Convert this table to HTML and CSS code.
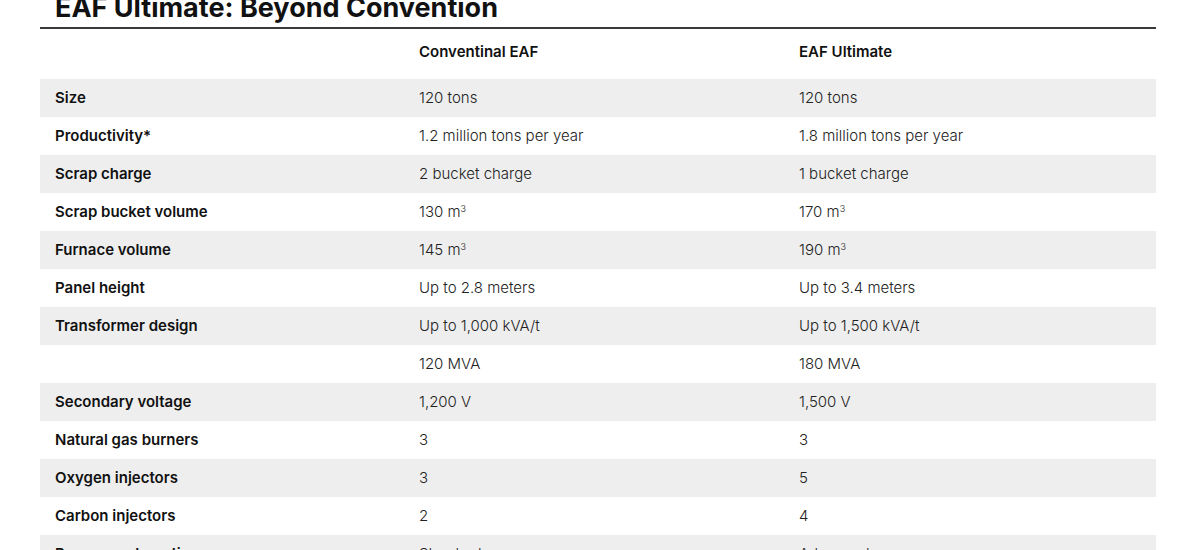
FILE: index.html
```html
<!DOCTYPE html>
<html lang="en">
<head>
<meta charset="utf-8">
<title>EAF Ultimate: Beyond Convention</title>
<link rel="stylesheet" href="styles.css">
</head>
<body>
<section class="compare">
  <h2 class="compare-title">EAF Ultimate: Beyond Convention</h2>
  <table class="compare-table">
    <colgroup>
      <col class="col-label">
      <col class="col-conv">
      <col class="col-ult">
    </colgroup>
    <thead>
      <tr>
        <th></th>
        <th>Conventinal EAF</th>
        <th>EAF Ultimate</th>
      </tr>
    </thead>
    <tbody>
      <tr><th>Size</th><td>120 tons</td><td>120 tons</td></tr>
      <tr><th>Productivity*</th><td>1.2 million tons per year</td><td>1.8 million tons per year</td></tr>
      <tr><th>Scrap charge</th><td>2 bucket charge</td><td>1 bucket charge</td></tr>
      <tr><th>Scrap bucket volume</th><td>130 m<sup>3</sup></td><td>170 m<sup>3</sup></td></tr>
      <tr><th>Furnace volume</th><td>145 m<sup>3</sup></td><td>190 m<sup>3</sup></td></tr>
      <tr><th>Panel height</th><td>Up to 2.8 meters</td><td>Up to 3.4 meters</td></tr>
      <tr><th>Transformer design</th><td>Up to 1,000 kVA/t</td><td>Up to 1,500 kVA/t</td></tr>
      <tr><th></th><td>120 MVA</td><td>180 MVA</td></tr>
      <tr><th>Secondary voltage</th><td>1,200 V</td><td>1,500 V</td></tr>
      <tr><th>Natural gas burners</th><td>3</td><td>3</td></tr>
      <tr><th>Oxygen injectors</th><td>3</td><td>5</td></tr>
      <tr><th>Carbon injectors</th><td>2</td><td>4</td></tr>
      <tr><th>Process automation</th><td>Standard</td><td>Advanced</td></tr>
    </tbody>
  </table>
</section>
</body>
</html>
```
FILE: styles.css
```css
html, body {
  margin: 0;
  padding: 0;
  background: #ffffff;
}

body {
  font-family: "Inter", "Liberation Sans", sans-serif;
  color: #111111;
}

.compare {
  width: 1116px;
  margin-left: 40px;
}

.compare-title {
  margin: -9px 0 0 0;
  padding: 0 0 2px 15px;
  font-size: 27px;
  line-height: 34px;
  font-weight: 700;
  color: #111111;
  border-bottom: 2px solid #3a3a3a;
}

.compare-table {
  width: 1116px;
  border-collapse: collapse;
  table-layout: fixed;
  font-size: 15px;
}

.col-label { width: 364px; }
.col-conv { width: 380px; }
.col-ult { width: 372px; }

.compare-table th,
.compare-table td {
  text-align: left;
  vertical-align: middle;
  padding: 0 15px;
  line-height: 20px;
}

.compare-table thead th {
  height: 50px;
  padding-top: 0;
  padding-bottom: 4px;
  font-weight: 600;
  box-sizing: border-box;
}

.compare-table tbody tr {
  height: 38px;
}

.compare-table tbody th {
  font-weight: 600;
}

.compare-table tbody td {
  font-weight: 300;
  color: #222222;
}

.compare-table tbody tr:nth-child(odd) {
  background: #eeeeee;
}

.compare-table sup {
  font-size: 9px;
  line-height: 0;
  vertical-align: 5px;
}
```
